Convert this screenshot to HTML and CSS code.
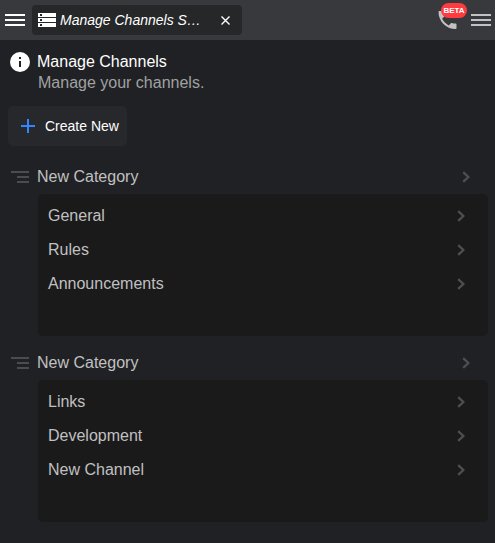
FILE: index.html
```html
<!DOCTYPE html>
<html lang="en">
<head>
<meta charset="utf-8">
<title>Manage Channels</title>
<link rel="stylesheet" href="styles.css">
</head>
<body>
<svg width="0" height="0" class="defs">
  <symbol id="chevron" viewBox="0 0 8 12"><path d="M1.2 1.2 6.4 6 1.2 10.8" fill="none" stroke="currentColor" stroke-width="2.3"/></symbol>
  <symbol id="lines" viewBox="0 0 18 12"><path d="M0 1H18M6 6H18M6 11H18" stroke="currentColor" stroke-width="2"/></symbol>
  <symbol id="menu" viewBox="0 0 20 12"><path d="M0 1H20M0 6H20M0 11H20" stroke="currentColor" stroke-width="2"/></symbol>
</svg>
<header class="topbar">
  <svg class="menu"><use href="#menu"/></svg>
  <div class="tab">
    <svg class="server" viewBox="0 0 18 14"><path fill="#fff" d="M0 0H18V4H0ZM0 5H18V9H0ZM0 10H18V14H0Z"/><path fill="#242527" d="M2 1H4V3H2ZM2 6H4V8H2ZM2 11H4V13H2Z"/></svg>
    <span class="tab-title">Manage Channels S…</span>
    <svg class="close" viewBox="0 0 9 9"><path d="M.5.5 8.5 8.5M8.5.5.5 8.5" stroke="#fff" stroke-width="1.4"/></svg>
  </div>
  <div class="call">
    <svg class="phone" viewBox="3 3 18 18"><path fill="#c2c2c3" d="M6.62 10.79c1.44 2.83 3.76 5.14 6.59 6.59l2.2-2.2c.27-.27.67-.36 1.02-.24 1.12.37 2.33.57 3.57.57.55 0 1 .45 1 1V20c0 .55-.45 1-1 1C10.61 21 3 13.39 3 4c0-.55.45-1 1-1h3.5c.55 0 1 .45 1 1 0 1.25.2 2.45.57 3.57.11.35.03.74-.25 1.02z"/></svg>
    <span class="badge">BETA</span>
  </div>
  <svg class="menu dim"><use href="#menu"/></svg>
</header>
<main>
  <section class="intro">
    <svg class="info" viewBox="0 0 20 20"><circle cx="10" cy="10" r="10" fill="#fff"/><path fill="#202124" d="M9 5H11V7H9ZM9 9H11V15H9Z"/></svg>
    <div>
      <h1>Manage Channels</h1>
      <p>Manage your channels.</p>
    </div>
  </section>
  <button class="create"><svg class="plus" viewBox="0 0 14 14"><path d="M7 0V14M0 7H14" stroke="#3385ff" stroke-width="2"/></svg>Create New</button>
  <section class="category">
    <div class="heading"><svg class="lines"><use href="#lines"/></svg><span>New Category</span><svg class="chevron"><use href="#chevron"/></svg></div>
    <ul>
      <li>General<svg class="chevron"><use href="#chevron"/></svg></li>
      <li>Rules<svg class="chevron"><use href="#chevron"/></svg></li>
      <li>Announcements<svg class="chevron"><use href="#chevron"/></svg></li>
    </ul>
  </section>
  <section class="category">
    <div class="heading"><svg class="lines"><use href="#lines"/></svg><span>New Category</span><svg class="chevron"><use href="#chevron"/></svg></div>
    <ul>
      <li>Links<svg class="chevron"><use href="#chevron"/></svg></li>
      <li>Development<svg class="chevron"><use href="#chevron"/></svg></li>
      <li>New Channel<svg class="chevron"><use href="#chevron"/></svg></li>
    </ul>
  </section>
</main>
</body>
</html>
```
FILE: styles.css
```css
* { box-sizing: border-box; }
body {
  margin: 0;
  height: 543px;
  overflow: hidden;
  background: #202124;
  color: #c0c0c1;
  font: 16px/20px "Liberation Sans", Arial, sans-serif;
}
svg { display: block; flex: none; }
.defs { display: none; }
.topbar {
  display: flex;
  align-items: center;
  height: 40px;
  padding: 0 4px 0 5px;
  background: #38393c;
}
.menu { width: 20px; height: 12px; color: #fff; }
.menu.dim { color: #c2c2c3; margin-left: 14px; }
.tab {
  display: flex;
  align-items: center;
  width: 210px;
  height: 30px;
  margin-left: 7px;
  padding: 0 12px 0 6px;
  border-radius: 4px;
  background: #262729;
  color: #fff;
}
.server { width: 18px; height: 14px; }
.tab-title {
  width: 146px;
  margin-left: 4px;
  white-space: nowrap;
  font-size: 14px;
  font-style: italic;
}
.close { width: 9px; height: 9px; margin-left: auto; }
.call { position: relative; margin-left: auto; }
.phone { width: 19px; height: 18px; }
.badge {
  position: absolute;
  left: 3px;
  top: -8px;
  width: 26px;
  height: 15px;
  border-radius: 8px;
  background: #fd3b40;
  color: #fff;
  font-size: 8px;
  font-weight: bold;
  line-height: 15px;
  text-align: center;
}
.intro { display: flex; padding: 12px 10px 0; }
.info { width: 20px; height: 20px; }
.intro div { margin-left: 7px; }
h1 { margin: 0; color: #fff; font-size: 16px; font-weight: normal; }
p { margin: 1px 0 0 1px; color: #a0a1a2; }
.create {
  display: flex;
  align-items: center;
  width: 119px;
  height: 40px;
  margin: 13px 0 0 8px;
  padding: 0 0 0 13px;
  border: 0;
  border-radius: 5px;
  background: #27282b;
  color: #fff;
  font: 14px/20px "Liberation Sans", Arial, sans-serif;
}
.plus { width: 14px; height: 14px; margin-right: 10px; }
.category { padding: 0 7px 0 11px; margin-bottom: 10px; }
.create + .category { margin-top: 14px; }
.heading { display: flex; align-items: center; height: 34px; padding-right: 18px; }
.lines { width: 18px; height: 12px; margin-right: 8px; color: #4b4c4e; }
.chevron { width: 8px; height: 12px; margin-left: auto; color: #4e4f50; }
ul {
  height: 142px;
  margin: 0 0 0 27px;
  padding: 5px 23px 0 10px;
  border-radius: 5px;
  background: #1a1a1b;
  list-style: none;
}
li { display: flex; align-items: center; height: 34px; }
```
